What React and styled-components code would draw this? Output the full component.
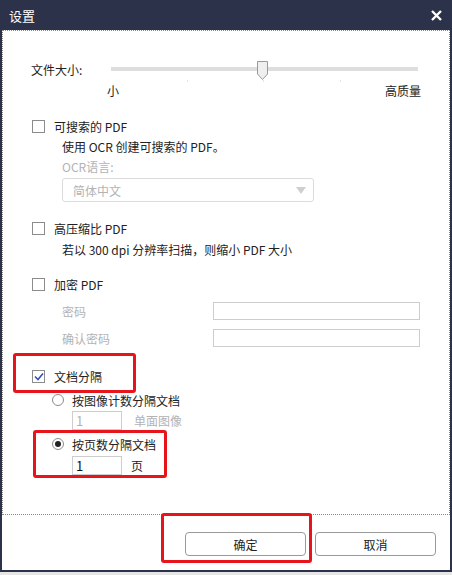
import styled, { createGlobalStyle } from 'styled-components';

const GlobalStyle = createGlobalStyle`
  html, body {
    margin: 0;
    padding: 0;
    background: #e6e6e6;
  }
  body {
    font-family: "Noto Sans CJK SC", "Noto Sans", sans-serif;
    font-size: 12px;
    color: #222;
  }
`;

const Window = styled.div`
  position: relative;
  width: 452px;
  height: 572px;
  box-sizing: border-box;
  background: #fff;
  border: 2px solid #2c3249;
  border-top: none;
  display: flex;
  flex-direction: column;
`;

const TitleBar = styled.div`
  height: 30px;
  margin: 0 -2px;
  background: #2c3249;
  color: #fff;
  display: flex;
  align-items: center;
  justify-content: space-between;
  padding: 0 9px 0 9px;
  font-size: 13px;
`;

const CloseButton = styled.span`
  display: flex;
  align-items: center;
  justify-content: center;
  width: 14px;
  height: 14px;
`;

const Panel = styled.div`
  height: 485px;
  box-sizing: border-box;
  border: 1px dotted #8a8a8a;
  padding: 0 28px;
  display: flex;
  flex-direction: column;
`;

const SliderRow = styled.div`
  margin-top: 28px;
  height: 20px;
  display: flex;
  align-items: center;
`;

const SliderLabel = styled.span`
  width: 80px;
`;

const Track = styled.div`
  position: relative;
  flex: 1;
  margin-right: 3px;
  height: 4px;
  background: #dedede;
`;

const Thumb = styled.svg`
  position: absolute;
  left: 146px;
  top: -6px;
`;

const Tick = styled.span`
  position: absolute;
  top: 13px;
  width: 1px;
  height: 2px;
  background: #e4e4e4;
`;

const ScaleRow = styled.div`
  height: 22px;
  display: flex;
  align-items: center;
  justify-content: space-between;
  padding-left: 76px;
`;

const CheckRow = styled.label`
  height: 22px;
  display: flex;
  align-items: center;
  gap: 9px;
  margin-top: ${(p) => p.$mt || 0}px;
  padding-left: 1px;
`;

const Box = styled.span`
  width: 13px;
  height: 13px;
  box-sizing: border-box;
  border: 1px solid #8c8c8c;
  background: #fff;
  display: flex;
  align-items: center;
  justify-content: center;
`;

const Line = styled.div`
  height: ${(p) => p.$h || 20}px;
  line-height: ${(p) => p.$h || 20}px;
  padding-left: 31px;
  color: ${(p) => (p.$muted ? '#b3b3b3' : '#222')};
`;

const Select = styled.div`
  margin: 1px 0 0 31px;
  width: 252px;
  height: 24px;
  box-sizing: border-box;
  border: 1px solid #dcdcdc;
  border-radius: 3px;
  display: flex;
  align-items: center;
  justify-content: space-between;
  padding: 0 7px 0 10px;
  color: #b3b3b3;
`;

const Caret = styled.span`
  width: 0;
  height: 0;
  border-left: 5px solid transparent;
  border-right: 5px solid transparent;
  border-top: 7px solid #cfcfcf;
`;

const FieldRow = styled.div`
  height: 20px;
  margin-top: ${(p) => p.$mt || 0}px;
  display: flex;
  align-items: center;
  padding-left: 31px;
  color: #b3b3b3;
`;

const FieldLabel = styled.span`
  width: 151px;
`;

const TextBox = styled.div`
  width: ${(p) => p.$w}px;
  height: ${(p) => p.$h || 18}px;
  box-sizing: border-box;
  border: 1px solid #cdcdcd;
  background: #fff;
  display: flex;
  align-items: center;
  padding-left: 3px;
  font-size: 13px;
  color: ${(p) => (p.$muted ? '#b3b3b3' : '#111')};
`;

const RadioRow = styled.label`
  height: 20px;
  margin-top: ${(p) => p.$mt || 0}px;
  display: flex;
  align-items: center;
  gap: 8px;
  padding-left: 21px;
`;

const Radio = styled.span`
  width: 12px;
  height: 12px;
  box-sizing: border-box;
  border-radius: 50%;
  border: 1px solid #8c8c8c;
  display: flex;
  align-items: center;
  justify-content: center;

  &::after {
    content: '';
    width: 6px;
    height: 6px;
    border-radius: 50%;
    background: ${(p) => (p.$on ? '#222' : 'transparent')};
  }
`;

const CountRow = styled.div`
  height: 20px;
  margin-top: ${(p) => p.$mt || 0}px;
  display: flex;
  align-items: center;
  padding-left: 41px;
  gap: ${(p) => p.$gap}px;
  color: ${(p) => (p.$muted ? '#b3b3b3' : '#222')};
`;

const Footer = styled.div`
  flex: 1;
  display: flex;
  justify-content: flex-end;
  align-items: flex-start;
  gap: 9px;
  padding: 17px 14px 0 0;
`;

const Button = styled.button`
  width: 121px;
  height: 24px;
  border: 1px solid #9a9a9a;
  border-radius: 4px;
  background: #fff;
  font-family: inherit;
  font-size: 12px;
  color: #222;
  cursor: pointer;
`;

const Mark = styled.div`
  position: absolute;
  left: ${(p) => p.$x}px;
  top: ${(p) => p.$y}px;
  width: ${(p) => p.$w}px;
  height: ${(p) => p.$h}px;
  box-sizing: border-box;
  border: 3px solid #e8141b;
  border-radius: 3px;
  pointer-events: none;
`;

const Check = () => (
  <svg width="10" height="9" viewBox="0 0 10 9">
    <path d="M1 4.5 L4 7.5 L9 1.5" fill="none" stroke="#3a4db8" strokeWidth="1.6" />
  </svg>
);

const App = () => (
  <>
    <GlobalStyle />
    <Window>
      <TitleBar>
        <span>设置</span>
        <CloseButton>
          <svg width="11" height="11" viewBox="0 0 11 11">
            <path d="M1 1 L10 10 M10 1 L1 10" stroke="#fff" strokeWidth="2.4" />
          </svg>
        </CloseButton>
      </TitleBar>
      <Panel>
        <SliderRow>
          <SliderLabel>文件大小:</SliderLabel>
          <Track>
            <Tick style={{ left: 76 }} />
            <Tick style={{ left: 152 }} />
            <Tick style={{ left: 229 }} />
            <Thumb width="11" height="19" viewBox="0 0 11 19">
              <path d="M0.5 0.5 H10.5 V13 L5.5 18.5 L0.5 13 Z" fill="#efefef" stroke="#9a9a9a" />
            </Thumb>
          </Track>
        </SliderRow>
        <ScaleRow>
          <span>小</span>
          <span>高质量</span>
        </ScaleRow>

        <CheckRow $mt={14}>
          <Box />
          可搜索的 PDF
        </CheckRow>
        <Line>使用 OCR 创建可搜索的 PDF。</Line>
        <Line $muted>OCR语言:</Line>
        <Select>
          简体中文
          <Caret />
        </Select>

        <CheckRow $mt={15}>
          <Box />
          高压缩比 PDF
        </CheckRow>
        <Line $h={22}>若以 300 dpi 分辨率扫描，则缩小 PDF 大小</Line>

        <CheckRow $mt={12}>
          <Box />
          加密 PDF
        </CheckRow>
        <FieldRow $mt={6}>
          <FieldLabel>密码</FieldLabel>
          <TextBox $w={207} />
        </FieldRow>
        <FieldRow $mt={7}>
          <FieldLabel>确认密码</FieldLabel>
          <TextBox $w={207} />
        </FieldRow>

        <CheckRow $mt={17}>
          <Box>
            <Check />
          </Box>
          文档分隔
        </CheckRow>
        <RadioRow $mt={3}>
          <Radio />
          按图像计数分隔文档
        </RadioRow>
        <CountRow $muted $gap={12}>
          <TextBox $w={50} $h={19} $muted>1</TextBox>
          单面图像
        </CountRow>
        <RadioRow $mt={4}>
          <Radio $on />
          按页数分隔文档
        </RadioRow>
        <CountRow $mt={1} $gap={9}>
          <TextBox $w={50} $h={19}>1</TextBox>
          页
        </CountRow>
      </Panel>
      <Footer>
        <Button>确定</Button>
        <Button>取消</Button>
      </Footer>

      <Mark $x={11} $y={353} $w={123} $h={40} />
      <Mark $x={31} $y={430} $w={134} $h={48} />
      <Mark $x={159} $y={513} $w={151} $h={50} />
    </Window>
  </>
);

export default App;
